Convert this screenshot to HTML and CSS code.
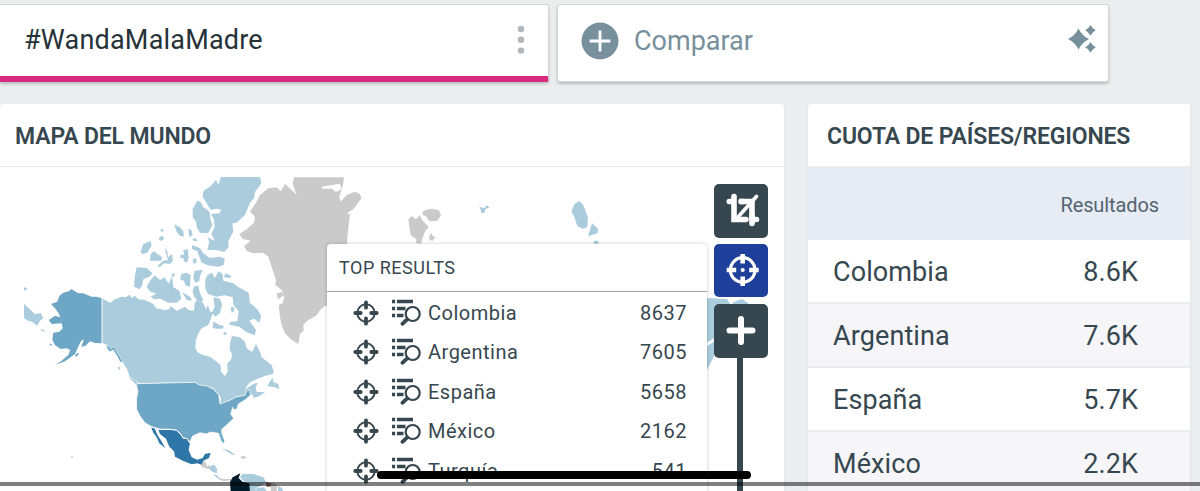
FILE: index.html
```html
<!DOCTYPE html>
<html lang="es">
<head>
  <meta charset="UTF-8" />
  <meta name="viewport" content="width=device-width, initial-scale=1.0"/>
  <title>#WandaMalaMadre</title>
  <link rel="stylesheet" href="styles.css">
</head>
<body>
  <svg class="defs" width="0" height="0">
    <symbol id="target" viewBox="0 0 26 26">
      <circle cx="13" cy="13" r="8.7" fill="none" stroke="currentColor" stroke-width="2"/>
      <path d="M13 2.3v5.4M13 18.3v5.4M2.3 13h5.4M18.3 13h5.4" stroke="currentColor" stroke-width="3.8" stroke-linecap="round"/>
    </symbol>
    <symbol id="list-search" viewBox="0 0 30 28">
      <path d="M1 2.500h3.200M6 2.500h16M1 9.500h3.200M6 9.500h8.500M1 16.500h3.200M6 16.500h6.500" stroke="currentColor" stroke-width="3.4"/>
      <circle cx="21.700" cy="15" r="7" fill="none" stroke="currentColor" stroke-width="2.200"/>
      <path d="M16.200 20.400l-4.800 4.400" stroke="currentColor" stroke-width="3.800" stroke-linecap="round"/>
    </symbol>
  </svg>

  <div class="queries">
    <div class="query">
      <span>#WandaMalaMadre</span>
      <svg class="dots" width="8" height="30" viewBox="0 0 8 30">
        <circle cx="4" cy="4" r="3.2"/><circle cx="4" cy="14.8" r="3.2"/><circle cx="4" cy="25.6" r="3.2"/>
      </svg>
    </div>
    <div class="compare">
      <svg width="38" height="38" viewBox="0 0 38 38">
        <circle cx="19" cy="19" r="18.5" fill="#78909c"/>
        <path d="M19 8.6v20.8M8.6 19h20.8" stroke="#fff" stroke-width="2.8"/>
      </svg>
      <span>Comparar</span>
      <svg class="sparkles" width="28" height="28" viewBox="0 0 28 28">
        <path d="M10.5 3.5q3.400 7.100 10.5 10.5q-7.100 3.400-10.5 10.5q-3.400-7.100-10.5-10.5q7.100-3.400 10.5-10.5z"/>
        <path d="M22.5 0q1.700 3.600 5.3 5.3q-3.600 1.700-5.3 5.3q-1.700-3.600-5.3-5.3q3.600-1.700 5.3-5.3z"/>
        <path d="M22.5 17q1.700 3.600 5.3 5.3q-3.600 1.700-5.3 5.3q-1.700-3.600-5.3-5.3q3.600-1.700 5.3-5.3z"/>
      </svg>
    </div>
  </div>

  <div class="panels">
    <div class="panel map-panel">
      <h2>MAPA DEL MUNDO</h2>
      <div class="map">
        <svg class="world" width="784" height="324" viewBox="0 167 784 324">
          <!-- Alaska and the far east of Russia -->
          <g transform="translate(0 170) scale(.3333)">
            <path class="low" d="M72 402L90 418L104 432L122 430L130 444L120 452L111 467L98 456L84 452L72 444ZM72 351L83 356L72 363ZM120 478L130 479L137 485L128 484Z"/>
            <path class="mid alaska" d="M306 385L290 380L275 380L250 370L235 370L222 362L215 357L206 364L190 368L178 378L172 395L153 402L165 415L176 430L181 442L165 437L146 450L155 462L185 460L188 475L178 485L160 488L157 510L165 525L182 537L200 535L211 540L205 555L185 572L165 585L195 574L225 552L235 530L243 513L252 508L244 530L256 528L270 514L284 519L306 520L318 528L330 542L342 538L355 555L368 579L371 570L352 545L340 528L330 535L306 520ZM225 556l8-8l4 4l-8 8zM150 521l5 0l1 5l-5 1z"/>
          </g>
          <!-- Canadian arctic and Greenland -->
          <g transform="translate(120 170) scale(.3333)">
            <path class="low" d="M302 21L420 21L424 40L405 66L402 85L390 98L375 135L350 158L337 160L340 185L325 212L326 232L312 246L290 240L262 240L268 215L262 202L285 212L274 192L284 170L282 148L272 132L299 130L303 119L290 116L272 120L260 100L248 80L250 64L272 48L288 30L296 46Z"/>
            <path class="low" d="M232 92L242 96L250 112L268 124L272 150L277 165L264 190L240 188L230 172L228 155L218 140L218 118ZM163 163L180 172L190 183L192 200L180 197L170 186ZM205 176L214 180L218 194L208 202ZM122 178l8 0l0 7l-8 -1zM116 204l8-6l8 2l-2 9l-10 4zM62 245L70 222L92 213L95 226L82 248L66 252ZM92 252L102 244L126 262L124 272L90 272ZM134 235L142 244L144 262L156 252L159 272L150 282L132 280L120 291L112 288L130 272L144 270ZM190 240L204 238L206 262L202 278L192 274L190 264L180 264L182 254L192 254ZM216 226L240 234L250 250L270 264L300 260L314 266L312 284L296 290L262 286L244 276L232 244L216 236ZM218 268l10-3l2 12l-9 6zM217 206l10-1l6 8l-12 0z"/>
            <path class="low" d="M50 292L80 294L98 310L88 320L70 328L66 348L58 358L42 350L44 320ZM90 332L104 316L120 330L134 322L146 342L156 318L160 352L178 362L184 386L170 398L144 398L122 386L102 388L92 380L110 370L92 366L80 350ZM155 312l8-2l2 8l-8 3zM184 312L202 308L212 316L210 350L196 346L192 332L180 328ZM224 302L248 300L240 318L238 334L226 338L220 324ZM222 350L234 346L240 368L250 392L236 396L222 380L218 364ZM186 366L210 380L216 392L200 390ZM256 330L262 316L276 308L284 324L296 304L308 312L310 332L340 340L356 352L386 368L390 398L412 418L424 438L418 458L402 446L388 452L408 480L404 496L378 486L358 470L328 464L330 456L352 454L356 424L340 404L338 382L314 376L290 380L264 372L256 356ZM316 310L334 318L330 324L312 322ZM280 382L300 386L306 404L300 430L286 440L276 428L284 410ZM332 412l9-2l2 12l-8 6zM280 454L296 464L312 468L308 476L290 476L278 474ZM310 488l8-3l2 8l-8 2z"/>
            <path class="none" d="M522 22L672 22L670 40L658 80L662 95L680 75L705 65L720 72L724 85L700 118L680 130L690 132L682 200L680 405L615 408L600 420L590 436L560 454L550 465L551 482L540 492L535 522L515 510L495 490L485 465L480 440L476 405L488 400L493 380L485 360L466 345L468 330L458 300L445 260L430 248L400 250L380 243L372 228L392 212L368 207L358 192L380 178L402 158L405 140L390 125L408 98L420 75L445 55L470 52L482 64L495 42L512 58L530 74L518 42ZM470 370L484 366L492 376L474 388Z"/>
            <path class="sea" d="M605 50L660 41L664 58L648 66L636 56L608 56Z"/>
          </g>
          <!-- mainland, from Canada down to Colombia -->
          <g transform="translate(110 330) scale(.3333)">
            <path class="low" d="M-24 -95L0 -82L15 -92L35 -100L48 -98L58 -106L66 -97L75 -103L85 -92L105 -90L130 -78L138 -65L165 -60L178 -62L182 -72L200 -58L225 -70L235 -60L252 -58L254 -82L266 -95L280 -80L288 -62L294 -75L300 -55L310 -55L302 -32L295 -15L275 -5L265 10L258 30L256 55L264 68L282 76L300 80L320 95L332 105L333 125L345 138L353 125L352 100L363 90L366 72L359 60L360 40L366 18L390 22L405 35L410 55L425 65L430 60L438 41L450 65L455 82L485 105L491 125L488 132L465 138L440 148L418 158L404 178L418 170L430 162L444 158L437 172L440 186L465 186L450 197L432 204L428 195L420 192L416 178L410 180L405 195L378 200L360 210L330 222L333 205L326 192L310 175L290 168L268 165L255 156L88 160L75 150L60 142L52 120L38 96L28 75L10 50L0 58L-10 45L-24 40Z"/>
            <path class="low" d="M472 168L488 142L490 156L505 162L508 178L495 172ZM55 142L78 152L88 168L88 176L74 160ZM24 110l6 2l0 8l-5-3z"/>
            <path class="line" d="M-24 -95L-24 40L-10 46L0 60L10 52L28 78L38 98"/>
            <path class="panhandle" d="M-8 50L0 62L10 55L26 80L34 96"/>
            <path class="mid" d="M82 161L255 157L268 165L290 168L310 177L326 194L330 222L360 211L378 201L405 196L412 178L419 182L422 195L405 210L385 222L381 236L372 240L368 232L362 252L371 265L350 285L335 298L336 312L344 332L341 342L333 332L326 310L300 306L290 312L270 308L248 318L238 337L230 325L220 325L212 312L200 301L180 298L150 298L125 290L105 278L90 258L80 238L80 205L84 185L80 168Z"/>
            <path class="high" d="M145 299L180 299L200 301L212 314L220 325L230 325L240 340L236 360L245 382L262 389L278 384L285 372L302 368L297 384L280 392L276 405L262 400L245 403L220 393L195 380L192 364L178 350L168 326L150 312ZM123 291L134 295L142 314L154 333L166 355L148 340L140 322L130 308Z"/>
            <path class="line" d="M123 291L150 298L180 298L200 301L212 313L220 325L230 325L240 340"/>
            <path class="low" d="M335 357L355 360L376 374L366 374L350 364ZM292 412L312 404L322 416L320 430L308 426ZM310 432L322 436L328 446L318 442ZM398 432L430 432L460 442L468 456L452 468L426 480L412 466L400 452L390 440ZM440 474L462 472L470 483L438 483ZM420 470l16 4l2 9l-18 0zM504 468l12 6l4 9l-16 0z"/>
            <path class="none" d="M390 380L402 378L411 383L398 387ZM274 404L284 392L290 402L288 414L276 412ZM286 410l12-4l6 6l-14 6zM324 442L340 448L362 446L364 451L340 453L326 448ZM484 456L502 466L500 483L482 483Z"/>
            <path class="dim" d="M466 455L484 460L482 470L470 470Z"/>
            <path class="top" d="M391 430L386 444L398 456L418 460L420 483L362 483L360 456L368 442Z"/>
          </g>
          <!-- Svalbard, Franz Josef Land, Novaya Zemlya -->
          <g transform="translate(340 170) scale(.3333)">
            <path class="none" d="M205 148L216 138L228 148L240 136L246 150L266 170L254 186L242 222L228 218L230 208L212 196ZM248 124L272 116L296 120L303 136L292 152L268 154L258 138L248 136ZM268 198l6-10l4 10l8 4l-8 10l-10-2z"/>
            <path class="low" d="M418 111L434 114L440 106L449 112L436 118L434 128L424 130L422 118ZM718 92L730 106L744 142L742 172L728 176L712 168L702 138L694 124L704 102ZM756 160L775 178L772 190L744 199ZM760 216L768 211L777 216L774 222L760 220Z"/>
          </g>
          <path class="low" d="M704 298L728 299L731 303L742 299L748 303L748 340L716 340L714 356L707 370L704 370Z"/>
          <path class="strait" d="M703 347L720 336M728 298L732 304"/>
          <circle class="none" cx="72" cy="457" r="1"/>
        </svg>

        <div class="top-results">
          <h3>TOP RESULTS</h3>
          <ul>
            <li><svg class="target"><use href="#target"/></svg><svg class="list-search"><use href="#list-search"/></svg><span>Colombia</span><b>8637</b></li>
            <li><svg class="target"><use href="#target"/></svg><svg class="list-search"><use href="#list-search"/></svg><span>Argentina</span><b>7605</b></li>
            <li><svg class="target"><use href="#target"/></svg><svg class="list-search"><use href="#list-search"/></svg><span>España</span><b>5658</b></li>
            <li><svg class="target"><use href="#target"/></svg><svg class="list-search"><use href="#list-search"/></svg><span>México</span><b>2162</b></li>
            <li><svg class="target"><use href="#target"/></svg><svg class="list-search"><use href="#list-search"/></svg><span>Turquía</span><b>541</b></li>
          </ul>
        </div>

        <div class="controls">
          <button type="button">
            <svg width="54" height="54" viewBox="0 0 54 54" fill="none" stroke="#fff">
              <path d="M15.300 17.500h4.500M20 12.500V35.500h12M27 17.500h11V39.500M38 35.500h4.500" stroke-width="5.600" stroke-linecap="round"/>
              <path d="M25 17.500h5M38 30v5M19.800 35.300v.2" stroke-width="5.600"/>
              <path d="M24 33L42.500 12.500" stroke-width="3.600" stroke-linecap="round"/>
            </svg>
          </button>
          <button type="button" class="active">
            <svg width="54" height="53" viewBox="0 0 54 53" fill="none" stroke="#fff">
              <circle cx="28.700" cy="26" r="12.300" stroke-width="3.200"/>
              <path d="M28.700 10v9.500M28.700 32.500v9.500M12.700 26h9.500M35.200 26h9.500" stroke-width="4.600"/>
              <circle cx="28.700" cy="26" r="2.100" fill="#fff" stroke="none"/>
            </svg>
          </button>
          <button type="button">
            <svg width="54" height="54" viewBox="0 0 54 54">
              <path d="M27 15v23M15.500 26.500h23" stroke="#fff" stroke-width="6" stroke-linecap="round"/>
            </svg>
          </button>
          <div class="slider"></div>
        </div>
      </div>
    </div>

    <div class="panel share-panel">
      <h2>CUOTA DE PAÍSES/REGIONES</h2>
      <div class="share-head">Resultados</div>
      <div class="share-row"><span>Colombia</span><span>8.6K</span></div>
      <div class="share-row"><span>Argentina</span><span>7.6K</span></div>
      <div class="share-row"><span>España</span><span>5.7K</span></div>
      <div class="share-row"><span>México</span><span>2.2K</span></div>
    </div>
  </div>

  <div class="progress"></div>
  <div class="home-bar"></div>
</body>
</html>
```
FILE: styles.css
```css
* {
  box-sizing: border-box;
}

body {
  font-family: Roboto, 'Liberation Sans', sans-serif;
  background: #ebedef;
  margin: 0;
  height: 491px;
  overflow: hidden;
  position: relative;
  color: #37474f;
}

.defs {
  display: block;
}

h2, h3, ul {
  margin: 0;
  padding: 0;
}

.queries {
  display: flex;
  gap: 8px;
  padding-top: 4px;
}

.query, .compare {
  display: flex;
  align-items: center;
  height: 78px;
  background: white;
  border: 1px solid #d3d6d9;
  border-radius: 3px;
  box-shadow: 0 2px 3px rgba(0, 0, 0, 0.2);
  font-size: 27px;
}

.query {
  width: 549px;
  justify-content: space-between;
  padding: 0 23px 1px 24px;
  border-left: none;
  border-bottom: 6px solid #d82c7c;
  border-radius: 0 3px 3px 0;
  color: #263238;
  letter-spacing: 0.2px;
}

.dots {
  fill: #b0b8be;
}

.compare {
  width: 552px;
  padding: 0 12px 4px 23px;
  color: #78909c;
}

.compare span {
  margin-left: 15px;
}

.sparkles {
  margin-left: auto;
  margin-bottom: 4px;
  fill: #78909c;
}

.panels {
  display: flex;
  gap: 24px;
  margin-top: 22px;
}

.panel {
  height: 387px;
  background: white;
  border-radius: 3px 3px 0 0;
  box-shadow: 0 1px 3px rgba(0, 0, 0, 0.08);
  overflow: hidden;
}

.panel h2 {
  height: 63px;
  line-height: 66px;
  font-size: 23px;
  font-weight: 600;
  letter-spacing: -0.15px;
  border-bottom: 1px solid #e8eaec;
}

.map-panel {
  width: 784px;
}

.map-panel h2 {
  padding-left: 15px;
}

.map {
  position: relative;
  height: 324px;
}

.world {
  display: block;
}

.low { fill: #aaccdd; }
.mid { fill: #6ea6c5; stroke: #fff; stroke-width: 2; }
.alaska { stroke: none; }
.high { fill: #2f76a8; }
.top { fill: #021c2b; }
.none { fill: #cacaca; }
.dim { fill: #8a7468; }
.sea { fill: #fff; }
.line { fill: none; stroke: #fff; stroke-width: 3; }
.panhandle { fill: none; stroke: #6ea6c5; stroke-width: 5; }
.strait { fill: none; stroke: #fff; stroke-width: 3; }

/* list that floats over the map */
.top-results {
  position: absolute;
  left: 327px;
  top: 77px;
  width: 380px;
  height: 260px;
  background: white;
  border-radius: 4px;
  box-shadow: 0 0 4px rgba(0, 0, 0, 0.2);
}

.top-results h3 {
  height: 48px;
  padding-left: 12px;
  line-height: 48px;
  font-size: 18px;
  font-weight: 450;
  letter-spacing: 0.5px;
  border-bottom: 1px solid #9fa8ae;
}

.top-results ul {
  list-style: none;
  padding: 1px 20px 0 26px;
}

.top-results li {
  display: flex;
  align-items: center;
  height: 39.5px;
  font-size: 20px;
  font-weight: 450;
  letter-spacing: 0.5px;
}

.top-results b {
  margin-left: auto;
  font-weight: 450;
}

.target {
  width: 26px;
  height: 26px;
}

.list-search {
  width: 30px;
  height: 28px;
  margin: 0 7px 0 12px;
}

.controls {
  position: absolute;
  left: 714px;
  top: 17px;
  display: flex;
  flex-direction: column;
  align-items: center;
}

.controls button {
  width: 54px;
  height: 54px;
  padding: 0;
  margin-bottom: 6px;
  border: none;
  border-radius: 5px;
  background: #37474f;
}

.controls svg {
  display: block;
}

.controls .active {
  height: 53px;
  margin-bottom: 7px;
  background: #1f409a;
}

.controls button:last-of-type {
  margin: 0;
}

.slider {
  width: 6px;
  height: 140px;
  margin-right: 2px;
  background: #37474f;
}

.share-panel {
  width: 382px;
}

.share-panel h2 {
  padding-left: 19px;
}

.share-head {
  height: 73px;
  padding: 2px 31px 0 0;
  line-height: 72px;
  text-align: right;
  font-size: 20px;
  letter-spacing: -0.1px;
  color: #546570;
  background: #e6ebf4;
}

.share-row {
  display: flex;
  justify-content: space-between;
  height: 64px;
  padding: 0 52px 0 25px;
  line-height: 64px;
  font-size: 27px;
  letter-spacing: 0.1px;
  border-bottom: 2px solid #ebecee;
}

.share-row:nth-child(even) {
  background: #f6f6f9;
}

/* phone overlays at the bottom edge */
.progress {
  position: absolute;
  left: 0;
  right: 0;
  top: 482px;
  height: 4px;
  background: rgba(0, 0, 0, 0.5);
}

.home-bar {
  position: absolute;
  left: 377px;
  top: 471px;
  width: 374px;
  height: 8px;
  border-radius: 4px;
  background: black;
}
```
